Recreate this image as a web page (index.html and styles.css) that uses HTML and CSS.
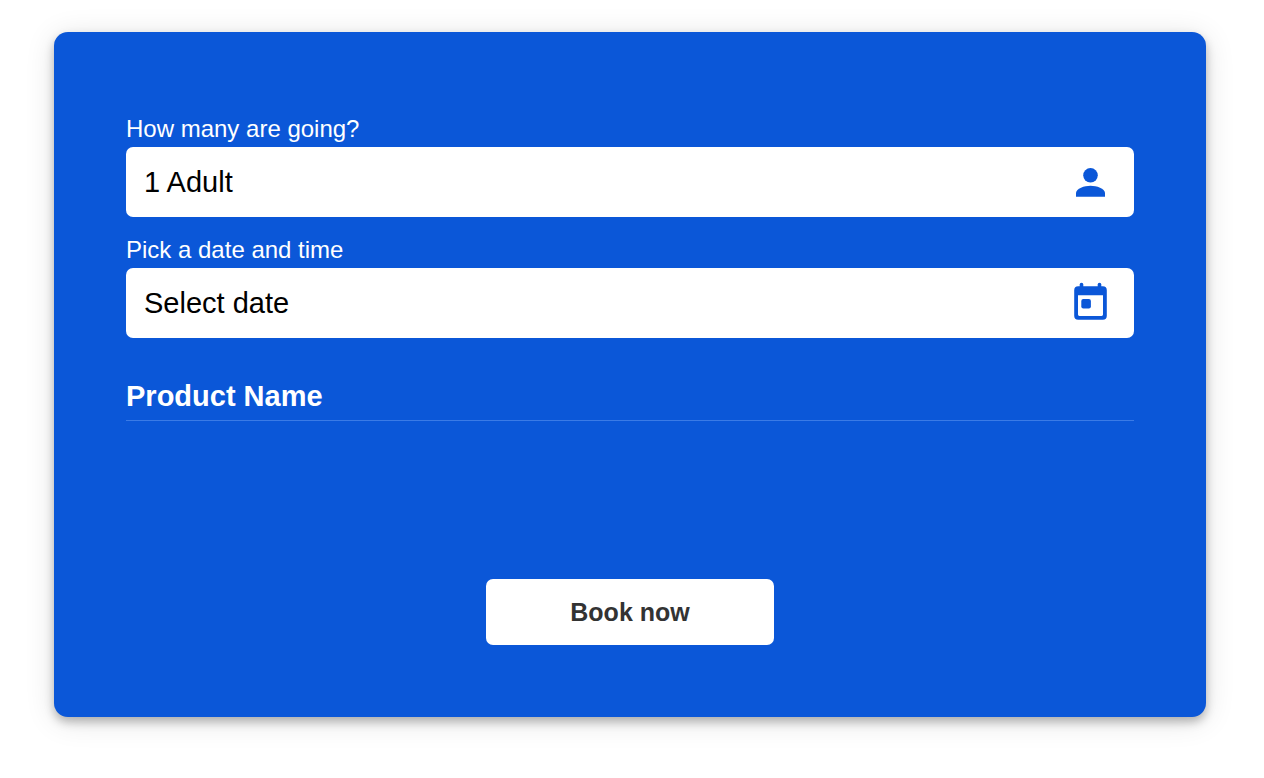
FILE: index.html
```html
<!DOCTYPE html>
<html lang="en">
<head>
<meta charset="utf-8">
<meta name="viewport" content="width=device-width, initial-scale=1">
<title>Book now</title>
<link rel="stylesheet" href="styles.css">
</head>
<body>
<main class="page">
  <form class="card">
    <div class="field">
      <label class="label" for="guests">How many are going?</label>
      <div class="control">
        <input class="input" id="guests" type="text" value="1 Adult" readonly>
        <svg class="icon" viewBox="0 0 44 44" aria-hidden="true">
          <circle cx="22.5" cy="15.300" r="7.3"/>
          <path d="M8 36.700V33C8 28.500 16.500 25.700 22.500 25.700S37 28.500 37 33V36.700Z"/>
        </svg>
      </div>
    </div>
    <div class="field">
      <label class="label" for="date">Pick a date and time</label>
      <div class="control">
        <input class="input" id="date" type="text" value="Select date" readonly>
        <svg class="icon" viewBox="0 0 44 44" aria-hidden="true">
          <rect x="11.700" y="1.800" width="3.600" height="8" rx="1.800"/>
          <rect x="29.700" y="1.800" width="3.600" height="8" rx="1.800"/>
          <path fill-rule="evenodd" d="M10.200 5.300H34.800Q38.800 5.300 38.800 9.300V34.800Q38.800 38.800 34.800 38.800H10.200Q6.200 38.800 6.200 34.800V9.300Q6.200 5.300 10.200 5.300ZM10 14.200V33.600Q10 35 11.400 35H33.600Q35 35 35 33.600V14.200Z"/>
          <rect x="13.300" y="18" width="9.600" height="9.600" rx="2"/>
        </svg>
      </div>
    </div>
    <h2 class="product">Product Name</h2>
    <button class="submit" type="submit">Book now</button>
  </form>
</main>
</body>
</html>
```
FILE: styles.css
```css
* {
  box-sizing: border-box;
}

body {
  margin: 0;
  background: #fff;
  font-family: "Liberation Sans", Arial, Helvetica, sans-serif;
}

.page {
  padding: 32px 58px 60px 54px;
}

.card {
  display: flex;
  flex-direction: column;
  padding: 80px 72px 72px;
  border-radius: 14px;
  background: #0b57d8;
  box-shadow: 0 5px 10px rgba(0, 0, 0, 0.26), 0 4px 30px rgba(0, 0, 0, 0.12);
  color: #fff;
}

.field {
  margin-bottom: 16px;
}

.label {
  display: block;
  padding-bottom: 2px;
  font-size: 24px;
  line-height: 33px;
}

.control {
  display: flex;
  align-items: center;
  padding-right: 22px;
  border-radius: 7px;
  background: #fff;
}

.input {
  flex: 1;
  min-width: 0;
  height: 70px;
  padding: 0 18px;
  border: 0;
  outline: 0;
  background: transparent;
  color: #000;
  font: inherit;
  font-size: 29px;
}

.icon {
  flex: none;
  width: 44px;
  height: 44px;
  fill: #0b57d8;
}

.product {
  margin: 25px 0 0;
  padding-bottom: 6px;
  border-bottom: 1px solid #3b7be6;
  font-size: 29px;
  line-height: 35px;
}

.submit {
  align-self: center;
  width: 288px;
  max-width: 100%;
  height: 66px;
  margin-top: 158px;
  border: 0;
  border-radius: 7px;
  background: #fff;
  color: #333;
  font: inherit;
  font-size: 25px;
  font-weight: 700;
}
```
